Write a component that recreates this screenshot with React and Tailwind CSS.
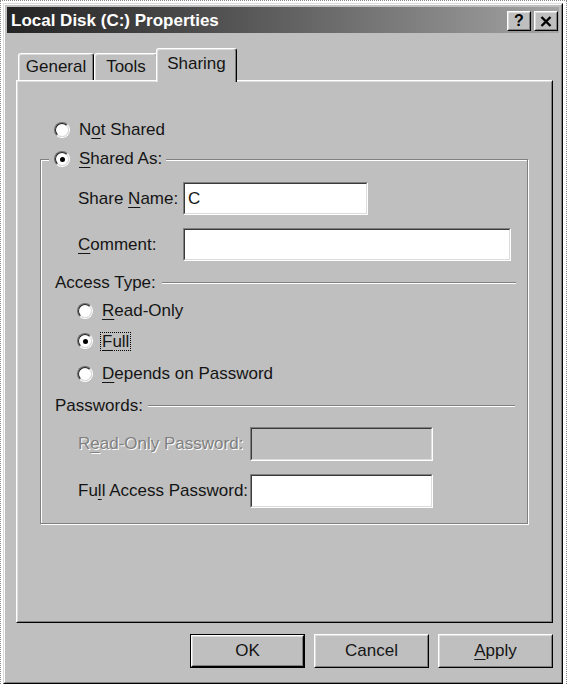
import React from "react";

const FONT = { fontFamily: '"Liberation Sans", Arial, sans-serif' };

function Radio({ checked }) {
  return (
    <span className="inline-flex w-[16px] h-[16px] shrink-0 rounded-full border border-t-[#707070] border-l-[#707070] border-r-white border-b-white">
      <span className="flex flex-1 items-center justify-center rounded-full border border-t-[#202020] border-l-[#202020] border-r-[#dcdcdc] border-b-[#dcdcdc] bg-white">
        {checked && <span className="w-[5px] h-[5px] rounded-full bg-black" />}
      </span>
    </span>
  );
}

function Sunken({ className, disabled, children }) {
  return (
    <div className={"border border-t-[#808080] border-l-[#808080] border-r-white border-b-white " + className}>
      <div
        className={
          "flex h-full items-center pl-[3px] border border-t-[#3a3a3a] border-l-[#3a3a3a] border-r-[#dcdcdc] border-b-[#dcdcdc] " +
          (disabled ? "bg-[#bfbfbf]" : "bg-white")
        }
      >
        {children}
      </div>
    </div>
  );
}

function Etched() {
  return <div className="flex-1 h-[2px] border-y border-t-[#808080] border-b-white" />;
}

function Btn({ children, def }) {
  return (
    <div className={"w-[115px] h-[34px] " + (def ? "border border-black" : "")}>
      <div className="h-full border border-t-white border-l-white border-r-black border-b-black">
        <div className="flex h-full items-center justify-center border border-t-[#dcdcdc] border-l-[#dcdcdc] border-r-[#808080] border-b-[#808080] text-[17px] text-[#151515]">
          {children}
        </div>
      </div>
    </div>
  );
}

function TitleBtn({ children }) {
  return (
    <div className="w-[24px] h-[20px] bg-[#bfbfbf] border border-t-white border-l-white border-r-black border-b-black">
      <div className="flex h-full items-center justify-center border border-t-[#dcdcdc] border-l-[#dcdcdc] border-r-[#808080] border-b-[#808080]">
        {children}
      </div>
    </div>
  );
}

function U({ children }) {
  return <span className="underline decoration-1 underline-offset-[3px]">{children}</span>;
}

export default function App() {
  return (
    <div
      className="w-[567px] h-[684px] bg-white border-t border-l border-r border-dotted border-[#8a8a8a] pt-[2px] pl-[2px] overflow-hidden"
      style={FONT}
    >
      {/* window */}
      <div className="w-[560px] h-[681px] border border-t-[#dcdcdc] border-l-[#dcdcdc] border-r-black border-b-black">
        <div className="h-full border border-t-white border-l-white border-r-[#808080] border-b-[#808080] bg-[#bfbfbf] p-[2px] flex flex-col">
          {/* title bar */}
          <div className="h-[26px] shrink-0 flex items-center bg-linear-to-r from-[#242424] to-[#a4a4a4] pl-[4px] pr-[1px]">
            <span className="flex-1 text-white font-bold text-[17px] leading-none">Local Disk (C:) Properties</span>
            <div className="flex gap-[3px] mt-[2px]">
              <TitleBtn>
                <span className="font-bold text-[16px] leading-none text-black">?</span>
              </TitleBtn>
              <TitleBtn>
                <svg width="12" height="11" viewBox="0 0 12 11">
                  <path d="M1.5 1 L10.5 10 M10.5 1 L1.5 10" stroke="#000" strokeWidth="2.4" />
                </svg>
              </TitleBtn>
            </div>
          </div>

          {/* tab strip */}
          <div className="mt-[15px] h-[32px] shrink-0 flex items-end pl-[11px] text-[17px] text-[#151515]">
            <div className="w-[76px] h-[27px] flex items-center justify-center rounded-t-[3px] border-t border-l border-r border-t-white border-l-white border-r-black shadow-[inset_-1px_0_0_#808080,inset_1px_1px_0_#dcdcdc]">
              General
            </div>
            <div className="w-[64px] h-[27px] flex items-center justify-center rounded-t-[3px] border-t border-l border-r border-t-white border-l-white border-r-black shadow-[inset_-1px_0_0_#808080,inset_1px_1px_0_#dcdcdc]">
              Tools
            </div>
            <div className="relative z-10 -ml-[2px] -mb-[2px] w-[81px] h-[34px] bg-[#bfbfbf] flex items-center justify-center pb-[4px] rounded-t-[3px] border-t border-l border-r border-t-white border-l-white border-r-black shadow-[inset_-1px_0_0_#808080,inset_1px_1px_0_#dcdcdc]">
              Sharing
            </div>
          </div>

          {/* panel */}
          <div className="ml-[9px] w-[537px] h-[543px] shrink-0 border border-t-white border-l-white border-r-black border-b-black">
            <div className="h-full border border-t-[#dcdcdc] border-l-[#dcdcdc] border-r-[#808080] border-b-[#808080] flex flex-col text-[17px] leading-[20px] text-[#151515]">
              <div className="mt-[38px] ml-[36px] h-[20px] flex items-center gap-[9px]">
                <Radio />
                <span>
                  N<U>o</U>t Shared
                </span>
              </div>

              {/* group box */}
              <div className="mt-[19px] ml-[22px] w-[488px] h-[365px] border border-[#808080] shadow-[inset_1px_1px_0_#fff,1px_1px_0_#fff] flex flex-col">
                <div className="-mt-[11px] ml-[8px] self-start h-[20px] flex items-center gap-[9px] bg-[#bfbfbf] pl-[5px] pr-[4px]">
                  <Radio checked />
                  <span>
                    <U>S</U>hared As:
                  </span>
                </div>

                <div className="mt-[13px] ml-[37px] h-[33px] flex items-center">
                  <span className="w-[105px]">
                    Share <U>N</U>ame:
                  </span>
                  <Sunken className="w-[185px] h-[33px]">
                    <span>C</span>
                  </Sunken>
                </div>

                <div className="mt-[13px] ml-[37px] h-[33px] flex items-center">
                  <span className="w-[105px]">
                    <U>C</U>omment:
                  </span>
                  <Sunken className="w-[328px] h-[33px]" />
                </div>

                <div className="mt-[12px] ml-[14px] mr-[11px] h-[20px] flex items-center gap-[6px]">
                  <span>Access Type:</span>
                  <Etched />
                </div>

                <div className="mt-[8px] ml-[36px] h-[20px] flex items-center gap-[9px]">
                  <Radio />
                  <span>
                    <U>R</U>ead-Only
                  </span>
                </div>

                <div className="mt-[10px] ml-[36px] h-[20px] flex items-center gap-[7px]">
                  <Radio checked />
                  <span className="border border-dotted border-black px-[1px] leading-[17px]">
                    <U>F</U>ull
                  </span>
                </div>

                <div className="mt-[13px] ml-[36px] h-[20px] flex items-center gap-[9px]">
                  <Radio />
                  <span>
                    <U>D</U>epends on Password
                  </span>
                </div>

                <div className="mt-[12px] ml-[14px] mr-[12px] h-[20px] flex items-center gap-[5px]">
                  <span>Passwords:</span>
                  <Etched />
                </div>

                <div className="mt-[11px] ml-[37px] h-[34px] flex items-center">
                  <span className="w-[172px] text-[#808080] [text-shadow:1px_1px_0_#fff]">
                    R<U>e</U>ad-Only Password:
                  </span>
                  <Sunken disabled className="w-[183px] h-[34px]" />
                </div>

                <div className="mt-[13px] ml-[37px] h-[34px] flex items-center">
                  <span className="w-[172px]">
                    Fu<U>l</U>l Access Password:
                  </span>
                  <Sunken className="w-[183px] h-[34px]" />
                </div>
              </div>
            </div>
          </div>

          {/* buttons */}
          <div className="mt-[11px] mr-[6px] flex justify-end gap-[9px]">
            <Btn def>OK</Btn>
            <Btn>Cancel</Btn>
            <Btn>
              <U>A</U>pply
            </Btn>
          </div>
        </div>
      </div>
    </div>
  );
}
